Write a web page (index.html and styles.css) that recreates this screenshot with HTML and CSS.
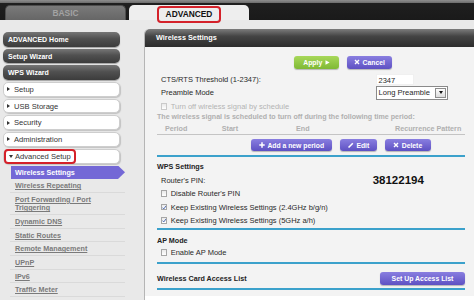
FILE: index.html
```html
<!DOCTYPE html>
<html lang="en">
<head>
    <meta charset="UTF-8">
    <meta name="viewport" content="width=device-width, initial-scale=1.0">
    <title>NETGEAR genie - Wireless Settings</title>
    <link rel="stylesheet" href="styles.css">
</head>
<body>
    <div class="topbar">
        <div class="tab tab-basic">BASIC</div>
        <div class="tab tab-adv"><span class="mark">ADVANCED</span></div>
    </div>

    <div class="main">
        <div class="sidebar">
            <div class="nav nav-dark">ADVANCED Home</div>
            <div class="nav nav-dark">Setup Wizard</div>
            <div class="nav nav-dark">WPS Wizard</div>
            <div class="nav nav-light"><span class="tri-r"></span>Setup</div>
            <div class="nav nav-light"><span class="tri-r"></span>USB Storage</div>
            <div class="nav nav-light"><span class="tri-r"></span>Security</div>
            <div class="nav nav-light"><span class="tri-r"></span>Administration</div>
            <div class="nav nav-light nav-open"><span class="mark-side"><span class="tri-d"></span>Advanced Setup</span></div>

            <div class="submenu">
                <div class="sub-active">Wireless Settings</div>
                <a class="sub">Wireless Repeating</a>
                <a class="sub">Port Forwarding / Port<br>Triggering</a>
                <a class="sub">Dynamic DNS</a>
                <a class="sub">Static Routes</a>
                <a class="sub">Remote Management</a>
                <a class="sub">UPnP</a>
                <a class="sub">IPv6</a>
                <a class="sub">Traffic Meter</a>
            </div>
        </div>

        <div class="content">
            <div class="content-head">Wireless Settings</div>
            <div class="content-body">
                <div class="actions">
                    <div class="btn btn-apply">Apply
                        <svg width="5" height="5" viewBox="0 0 5 5"><path d="M0.5 0.3 L4.6 2.5 L0.5 4.7 Z" fill="#fff"/></svg>
                    </div>
                    <div class="btn btn-purple btn-cancel">
                        <svg width="6" height="6" viewBox="0 0 6 6"><path d="M1 1 L5 5 M5 1 L1 5" stroke="#fff" stroke-width="1.4"/></svg>Cancel
                    </div>
                </div>

                <div class="field-row r-cts">
                    <label>CTS/RTS Threshold (1-2347):</label>
                    <div class="text-input">2347</div>
                </div>
                <div class="field-row r-pre">
                    <label>Preamble Mode</label>
                    <div class="select">Long Preamble<span class="select-arrow"><span class="tri-dn"></span></span></div>
                </div>

                <div class="check-row r-sched disabled">
                    <span class="box"></span>Turn off wireless signal by schedule
                </div>
                <div class="note">The wireless signal is scheduled to turn off during the following time period:</div>
                <div class="thead">
                    <span class="th-first">Period</span>
                    <span>Start</span>
                    <span>End</span>
                    <span>Recurrence Pattern</span>
                </div>
                <div class="tbtns">
                    <div class="btn btn-purple btn-add">
                        <svg width="6" height="6" viewBox="0 0 6 6"><path d="M3 0.3 V5.7 M0.3 3 H5.7" stroke="#fff" stroke-width="1.5"/></svg>Add a new period
                    </div>
                    <div class="btn btn-purple btn-edit">
                        <svg width="6" height="6" viewBox="0 0 6 6"><path d="M0.8 5.2 L4.8 1.2" stroke="#fff" stroke-width="1.6"/><path d="M0.3 5.7 L0.6 4.4 L1.6 5.4 Z" fill="#fff"/></svg>Edit
                    </div>
                    <div class="btn btn-purple btn-delete">
                        <svg width="6" height="6" viewBox="0 0 6 6"><path d="M1 1 L5 5 M5 1 L1 5" stroke="#fff" stroke-width="1.4"/></svg>Delete
                    </div>
                </div>

                <div class="rule r-1"></div>
                <div class="sec-title t-wps">WPS Settings</div>
                <div class="pin-row">
                    <label>Router's PIN:</label>
                    <span class="pin">38122194</span>
                </div>
                <div class="check-row">
                    <span class="box"></span>Disable Router's PIN
                </div>
                <div class="check-row">
                    <span class="box"><svg width="5" height="5" viewBox="0 0 5 5"><path d="M0.5 2.6 L1.9 4.1 L4.6 0.7" stroke="#3a5aa8" stroke-width="1" fill="none"/></svg></span>Keep Existing Wireless Settings (2.4GHz b/g/n)
                </div>
                <div class="check-row">
                    <span class="box"><svg width="5" height="5" viewBox="0 0 5 5"><path d="M0.5 2.6 L1.9 4.1 L4.6 0.7" stroke="#3a5aa8" stroke-width="1" fill="none"/></svg></span>Keep Existing Wireless Settings (5GHz a/h)
                </div>

                <div class="rule r-2"></div>
                <div class="sec-title t-ap">AP Mode</div>
                <div class="check-row r-ap">
                    <span class="box"></span>Enable AP Mode
                </div>

                <div class="rule r-3"></div>
                <div class="access-row">
                    <span class="sec-label">Wireless Card Access List</span>
                    <div class="btn btn-purple btn-access">Set Up Access List</div>
                </div>
                <div class="rule r-4"></div>
            </div>
            <div class="foot"></div>
        </div>
    </div>
</body>
</html>
```

FILE: styles.css
```css
body {
    margin: 0;
    width: 474px;
    height: 300px;
    overflow: hidden;
    background-color: #e9e9e9;
    font-family: 'Liberation Sans', Arial, sans-serif;
    font-size: 7.5px;
    color: #2a2a2a;
}

/* top tabs */
.topbar {
    height: 20px;
    display: flex;
    align-items: flex-end;
    gap: 3px;
    padding-left: 5px;
    background: linear-gradient(#8e8e8e 0, #6c6c6c 3px, #1f1f1f 3px, #1a1a1a 100%);
}
.tab {
    height: 15.3px;
    border-radius: 5px 5px 0 0;
    display: flex;
    justify-content: center;
    font-weight: bold;
    font-size: 8.4px;
    box-sizing: border-box;
}
.tab-basic {
    width: 121px;
    align-items: center;
    background: linear-gradient(#7a7a7a, #666666);
    border: 1px solid #4e4e4e;
    border-bottom: none;
    color: #a3a3a3;
}
.tab-adv {
    width: 120px;
    align-items: flex-start;
    background-color: #eeeeee;
    color: #111;
}
.mark {
    display: flex;
    align-items: center;
    justify-content: center;
    width: 64px;
    height: 16.7px;
    margin-top: 1.3px;
    box-sizing: border-box;
    border: 2px solid #d4212a;
    border-radius: 4px;
}

.main {
    display: flex;
}

/* left menu */
.sidebar {
    width: 144px;
    flex-shrink: 0;
    padding-top: 12px;
}
.nav {
    margin-left: 3px;
    width: 117px;
    height: 14.7px;
    margin-bottom: 2px;
    box-sizing: border-box;
    border-radius: 5px;
    display: flex;
    align-items: center;
}
.nav-dark {
    padding-left: 5px;
    background: linear-gradient(#767676, #505050 45%, #3c3c3c);
    color: #fff;
    font-weight: bold;
    font-size: 7px;
    box-shadow: 0 1px 1px rgba(0,0,0,0.3);
}
.nav-light {
    padding-left: 3px;
    background-color: #fff;
    border: 1px solid #cecece;
    box-shadow: 1px 1px 1px #c2c2c2;
    color: #333;
    font-size: 7.6px;
}
.tri-r {
    width: 0;
    height: 0;
    border-left: 3px solid #333;
    border-top: 2px solid transparent;
    border-bottom: 2px solid transparent;
    margin-right: 4px;
}
.nav-open {
    padding-left: 0;
}
.mark-side {
    display: flex;
    align-items: center;
    width: 72px;
    height: calc(100% + 2px);
    margin: -1px 0;
    box-sizing: border-box;
    padding-left: 3px;
    border: 2px solid #d4212a;
    border-radius: 4px;
}
.tri-d {
    width: 0;
    height: 0;
    border-top: 3px solid #333;
    border-left: 2px solid transparent;
    border-right: 2px solid transparent;
    margin-right: 2px;
}
.sub-active {
    margin-left: 11px;
    width: 114px;
    height: 13.5px;
    box-sizing: border-box;
    padding-left: 4px;
    display: flex;
    align-items: center;
    background-color: #7468d6;
    color: #fff;
    font-weight: bold;
    font-size: 7.2px;
    clip-path: polygon(0 0, calc(100% - 7px) 0, 100% 50%, calc(100% - 7px) 100%, 0 100%);
}
.sub {
    display: block;
    margin-left: 10px;
    width: 115px;
    box-sizing: border-box;
    padding: 3px 0 1.3px 5px;
    line-height: 8.4px;
    border-bottom: 1px solid #dadada;
    color: #7a7a7a;
    font-weight: bold;
    font-size: 7.2px;
    text-decoration: underline;
}

/* content panel */
.content {
    flex: 1;
    margin-top: 9.3px;
    border-left: 1px solid #b5b5b5;
    border-top-left-radius: 5px;
    background-color: #f3f3f3;
}
.content-head {
    height: 17.4px;
    padding-left: 11px;
    display: flex;
    align-items: center;
    border-top-left-radius: 5px;
    background: linear-gradient(#7c7c7c, #444 40%, #2c2c2c);
    color: #fff;
    font-weight: bold;
    font-size: 7.3px;
}
.content-body {
    padding: 0 9px 6px 12px;
}
.foot {
    height: 10px;
    background-color: #fff;
}

.actions {
    display: flex;
    gap: 8px;
    margin: 9.3px 0 0 137px;
    height: 13px;
}
.btn {
    height: 100%;
    box-sizing: border-box;
    border-radius: 3px;
    display: flex;
    align-items: center;
    justify-content: center;
    gap: 2.5px;
    color: #fff;
    font-weight: bold;
    font-size: 6.8px;
    box-shadow: 0 1px 1px rgba(0,0,0,0.25);
}
.btn-apply {
    width: 45px;
    background: linear-gradient(#a8d85a, #7fb934);
}
.btn-purple {
    background: linear-gradient(#897ee0, #5e51c3);
}
.btn-cancel {
    width: 45px;
}

.field-row {
    display: grid;
    grid-template-columns: 219px 1fr;
    align-items: center;
}
.field-row label {
    padding-left: 4px;
}
.r-cts {
    margin-top: 3.5px;
    height: 13.5px;
}
.r-pre {
    height: 14px;
}
.text-input {
    width: 38px;
    height: 11px;
    box-sizing: border-box;
    padding-left: 1.5px;
    line-height: 11px;
    background-color: #fff;
    border: 1px solid #f0f0f0;
    font-size: 7.5px;
}
.select {
    width: 72px;
    height: 13.3px;
    box-sizing: border-box;
    padding-left: 1.5px;
    display: flex;
    align-items: center;
    justify-content: space-between;
    background-color: #fff;
    border: 1px solid #8a8a8a;
    font-size: 7.6px;
}
.select-arrow {
    width: 11px;
    height: 9.5px;
    margin-right: 1px;
    box-sizing: border-box;
    display: flex;
    align-items: center;
    justify-content: center;
    border: 1px solid #8c8c8c;
    background: linear-gradient(#fdfdfd, #dcdcdc);
}
.tri-dn {
    width: 0;
    height: 0;
    border-top: 3px solid #111;
    border-left: 2.5px solid transparent;
    border-right: 2.5px solid transparent;
}

.check-row {
    display: flex;
    align-items: center;
    gap: 3.5px;
    padding-left: 3.7px;
    height: 13.5px;
}
.box {
    width: 6.5px;
    height: 6.5px;
    box-sizing: border-box;
    display: flex;
    align-items: center;
    justify-content: center;
    border: 1px solid #a6a6a6;
    background: linear-gradient(#e9e9e9, #fff);
}
.r-sched {
    height: 13px;
}
.disabled {
    color: #b3b3b3;
}
.disabled .box {
    border-color: #cacaca;
}
.note {
    height: 8px;
    line-height: 8px;
    color: #b0b0b0;
    font-weight: bold;
    font-size: 7.1px;
    white-space: nowrap;
}
.thead {
    display: grid;
    grid-template-columns: 64.7px 74.3px 99px 1fr;
    padding-top: 3.5px;
    height: 10px;
    line-height: 10px;
    border-bottom: 1px solid #c4c4c4;
    color: #b0b0b0;
    font-weight: bold;
    font-size: 7.2px;
}
.th-first {
    padding-left: 8px;
}
.tbtns {
    display: flex;
    gap: 8px;
    margin: 4px 0 0 93.7px;
    height: 11.5px;
}
.btn-add {
    width: 81.6px;
}
.btn-edit {
    width: 36.6px;
}
.btn-delete {
    width: 45.7px;
}

.rule {
    height: 1.5px;
    background-color: #3ba1cb;
}
.r-1 {
    margin-top: 4.5px;
}
.r-2 {
    margin-top: 1.1px;
}
.r-3 {
    margin-top: 3.5px;
}
.r-4 {
    margin-top: 3px;
}

.sec-title, .sec-label {
    font-weight: bold;
    font-size: 7.2px;
    color: #222;
}
.sec-title {
    display: flex;
    align-items: center;
}
.t-wps {
    margin-top: 3px;
    height: 13.4px;
}
.t-ap {
    margin-top: 4.5px;
    height: 12px;
}
.r-ap {
    height: 12.5px;
}
.pin-row {
    display: grid;
    grid-template-columns: 215.7px 1fr;
    align-items: center;
    height: 13.5px;
}
.pin-row label {
    padding-left: 4px;
}
.pin {
    font-weight: bold;
    font-size: 11.5px;
    color: #111;
}
.access-row {
    display: flex;
    align-items: center;
    justify-content: space-between;
    margin-top: 7.5px;
    height: 14px;
}
.btn-access {
    width: 85px;
    height: 12.7px;
    font-size: 6.9px;
}
```
